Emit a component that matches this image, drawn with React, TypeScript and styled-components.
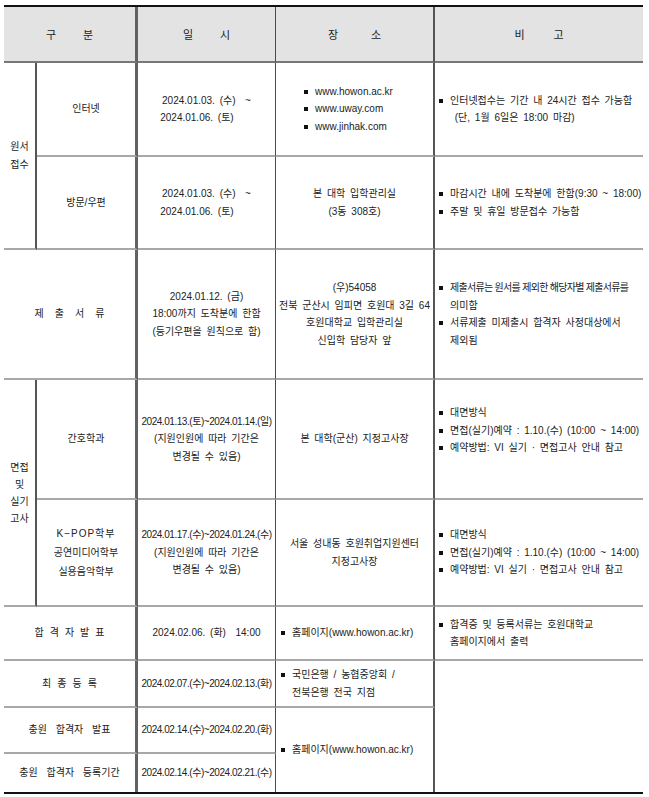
import React, { FunctionComponent, ReactNode } from "react";
import styled, { createGlobalStyle } from "styled-components";

// TYPES //
type Line = "sub" | "thick" | "thin" | "mid" | "none";

const LINES: Record<Line, string> = {
    sub: "2px solid #555",
    thick: "3px solid #626262",
    thin: "1px solid #4a4a4a",
    mid: "2px solid #555",
    none: "none",
};

// HELPERS //
const Spread: FunctionComponent<{ text: string; gap: number }> = ({ text, gap }) => (
    <SpreadRow $gap={gap}>
        {text.split(" ").map((ch, i) => (
            <span key={i}>{ch}</span>
        ))}
    </SpreadRow>
);

const Bullets: FunctionComponent<{ items: ReactNode[] }> = ({ items }) => (
    <List>
        {items.map((item, i) => (
            <Item key={i}>
                <Square />
                <span>{item}</span>
            </Item>
        ))}
    </List>
);

const App: FunctionComponent = () => {
    return (
        <>
            <GlobalStyle />
            <Page>
                <Table>
                    <colgroup>
                        <col style={{ width: 33 }} />
                        <col style={{ width: 101 }} />
                        <col style={{ width: 138 }} />
                        <col style={{ width: 159 }} />
                        <col style={{ width: 208 }} />
                    </colgroup>
                    <thead>
                        <Row $h={56}>
                            <Head colSpan={2} $r="thick"><Spread text="구 분" gap={27} /></Head>
                            <Head $r="thin"><Spread text="일 시" gap={27} /></Head>
                            <Head $r="mid"><Spread text="장 소" gap={33} /></Head>
                            <Head $r="none"><Spread text="비 고" gap={29} /></Head>
                        </Row>
                    </thead>
                    <tbody>
                        <Row $h={94}>
                            <Cell rowSpan={2} $r="sub">원서<br />접수</Cell>
                            <Cell $r="thick">인터넷</Cell>
                            <Cell $r="thin">2024.01.03.&nbsp;(수)&nbsp; ~<br />2024.01.06.&nbsp;(토)&nbsp;&nbsp;&nbsp;&nbsp;</Cell>
                            <Cell $r="mid">
                                <Centered>
                                    <Bullets items={["www.howon.ac.kr", "www.uway.com", "www.jinhak.com"]} />
                                </Centered>
                            </Cell>
                            <Cell $r="none" $align="left" $pl={4}>
                                <Bullets items={[<>인터넷접수는 기간 내 24시간 접수 가능함<br />&nbsp;(단, 1월 6일은 18:00 마감)</>]} />
                            </Cell>
                        </Row>
                        <Row $h={93}>
                            <Cell $r="thick">방문/우편</Cell>
                            <Cell $r="thin">2024.01.03.&nbsp;(수)&nbsp; ~<br />2024.01.06.&nbsp;(토)&nbsp;&nbsp;&nbsp;&nbsp;</Cell>
                            <Cell $r="mid">본 대학 입학관리실<br />(3동 308호)</Cell>
                            <Cell $r="none" $align="left" $pl={4}>
                                <Bullets items={["마감시간 내에 도착분에 한함(9:30 ~ 18:00)", "주말 및 휴일 방문접수 가능함"]} />
                            </Cell>
                        </Row>
                        <Row $h={130}>
                            <Cell colSpan={2} $r="thick"><Spread text="제 출 서 류" gap={11} /></Cell>
                            <Cell $r="thin">2024.01.12.&nbsp;(금)<br />18:00까지 도착분에 한함<br />(등기우편을 원칙으로 함)</Cell>
                            <Cell $r="mid">(우)54058<br />전북 군산시 임피면 호원대 3길 64<br />호원대학교 입학관리실<br />신입학 담당자 앞</Cell>
                            <Cell $r="none" $align="left" $pl={4}>
                                <Bullets items={[<><Narrow>제출서류는 원서를 제외한 해당자별 제출서류를</Narrow><br />의미함</>, <>서류제출 미제출시 합격자 사정대상에서<br />제외됨</>]} />
                            </Cell>
                        </Row>
                        <Row $h={120}>
                            <Cell rowSpan={2} $r="sub" $lh={17}>면접<br />및<br />실기<br />고사</Cell>
                            <Cell $r="thick">간호학과</Cell>
                            <Cell $r="thin"><Tight>2024.01.13.(토)~2024.01.14.(일)</Tight><br />(지원인원에 따라 기간은<br />변경될 수 있음)</Cell>
                            <Cell $r="mid">본 대학(군산) 지정고사장</Cell>
                            <Cell $r="none" $align="left" $pl={4} $pb={17}>
                                <Bullets items={["대면방식", "면접(실기)예약 : 1.10.(수) (10:00 ~ 14:00)", "예약방법: VI 실기 · 면접고사 안내 참고"]} />
                            </Cell>
                        </Row>
                        <Row $h={107}>
                            <Cell $r="thick" $lh={19}><Wide>K−POP학부</Wide><br />공연미디어학부<br />실용음악학부</Cell>
                            <Cell $r="thin"><Tight>2024.01.17.(수)~2024.01.24.(수)</Tight><br />(지원인원에 따라 기간은<br />변경될 수 있음)</Cell>
                            <Cell $r="mid">서울 성내동 호원취업지원센터<br />지정고사장</Cell>
                            <Cell $r="none" $align="left" $pl={4}>
                                <Bullets items={["대면방식", "면접(실기)예약 : 1.10.(수) (10:00 ~ 14:00)", "예약방법: VI 실기 · 면접고사 안내 참고"]} />
                            </Cell>
                        </Row>
                        <Row $h={54}>
                            <Cell colSpan={2} $r="thick"><Spread text="합 격 자 발 표" gap={6} /></Cell>
                            <Cell $r="thin">2024.02.06.&nbsp;(화)&nbsp; 14:00</Cell>
                            <Cell $r="mid" $align="left" $pl={5}>
                                <Bullets items={["홈페이지(www.howon.ac.kr)"]} />
                            </Cell>
                            <Cell $r="none" $align="left" $pl={4}>
                                <Bullets items={[<>합격증 및 등록서류는 호원대학교<br />홈페이지에서 출력</>]} />
                            </Cell>
                        </Row>
                        <Row $h={47}>
                            <Cell colSpan={2} $r="thick"><Spread text="최 종 등 록" gap={6} /></Cell>
                            <Cell $r="thin"><Tight>2024.02.07.(수)~2024.02.13.(화)</Tight></Cell>
                            <Cell $r="mid" $align="left" $pl={5}>
                                <Bullets items={[<>국민은행 / 농협중앙회 /<br />전북은행 전국 지점</>]} />
                            </Cell>
                            <Cell rowSpan={3} $r="none" $nb />
                        </Row>
                        <Row $h={46}>
                            <Cell colSpan={2} $r="thick" $ws={6}>충원 합격자 발표</Cell>
                            <Cell $r="thin"><Tight>2024.02.14.(수)~2024.02.20.(화)</Tight></Cell>
                            <Cell rowSpan={2} $r="mid" $nb $align="left" $pl={5}>
                                <Bullets items={["홈페이지(www.howon.ac.kr)"]} />
                            </Cell>
                        </Row>
                        <Row $h={38}>
                            <Cell colSpan={2} $r="thick" $nb $ws={6}>충원 합격자 등록기간</Cell>
                            <Cell $r="thin" $nb><Tight>2024.02.14.(수)~2024.02.21.(수)</Tight></Cell>
                        </Row>
                    </tbody>
                </Table>
            </Page>
        </>
    );
};

// STYLED COMPONENTS //
const GlobalStyle = createGlobalStyle`
    body {
        margin: 0;
        background: #fff;
        font-family: "Liberation Sans", "Noto Sans CJK KR", sans-serif;
    }
`;

const Page = styled.div`
    padding: 5px 0 0 4px;
`;

const Table = styled.table`
    border-collapse: separate;
    border-spacing: 0;
    table-layout: fixed;
    width: 639px;
    border-top: 2px solid #111;
    border-bottom: 2px solid #111;
    font-size: 10px;
    color: #222;
`;

const Row = styled.tr<{ $h: number }>`
    height: ${(p) => p.$h}px;
`;

const Head = styled.th<{ $r: Line }>`
    padding: 0;
    background: #e3e3e3;
    border-right: ${(p) => LINES[p.$r]};
    border-bottom: 2px solid #777;
    font-weight: normal;
    font-size: 11px;
    text-align: center;
    vertical-align: middle;
`;

const Cell = styled.td<{ $r: Line; $nb?: boolean; $align?: "left" | "center"; $pl?: number; $pb?: number; $lh?: number; $ws?: number }>`
    padding: 0 0 ${(p) => p.$pb ?? 0}px ${(p) => p.$pl ?? 0}px;
    border-right: ${(p) => LINES[p.$r]};
    border-bottom: ${(p) => (p.$nb ? "none" : "2px solid #a8a8a8")};
    text-align: ${(p) => p.$align ?? "center"};
    vertical-align: middle;
    line-height: ${(p) => p.$lh ?? 17.5}px;
    word-spacing: ${(p) => p.$ws ?? 2}px;
    white-space: nowrap;
`;

const SpreadRow = styled.span<{ $gap: number }>`
    display: inline-flex;
    gap: ${(p) => p.$gap}px;
    word-spacing: 0;
`;

const Centered = styled.div`
    display: flex;
    justify-content: center;
    padding-right: 12px;
`;

const List = styled.div`
    display: flex;
    flex-direction: column;
    text-align: left;
`;

const Item = styled.div`
    display: flex;
    align-items: flex-start;
    gap: 7px;
`;

const Square = styled.span`
    flex: none;
    width: 4px;
    height: 4px;
    margin-top: 7px;
    background: #111;
`;

const Tight = styled.span`
    letter-spacing: -0.45px;
`;

const Narrow = styled.span`
    letter-spacing: -0.7px;
    word-spacing: 0;
`;

const Wide = styled.span`
    letter-spacing: 1px;
`;

export default App;
